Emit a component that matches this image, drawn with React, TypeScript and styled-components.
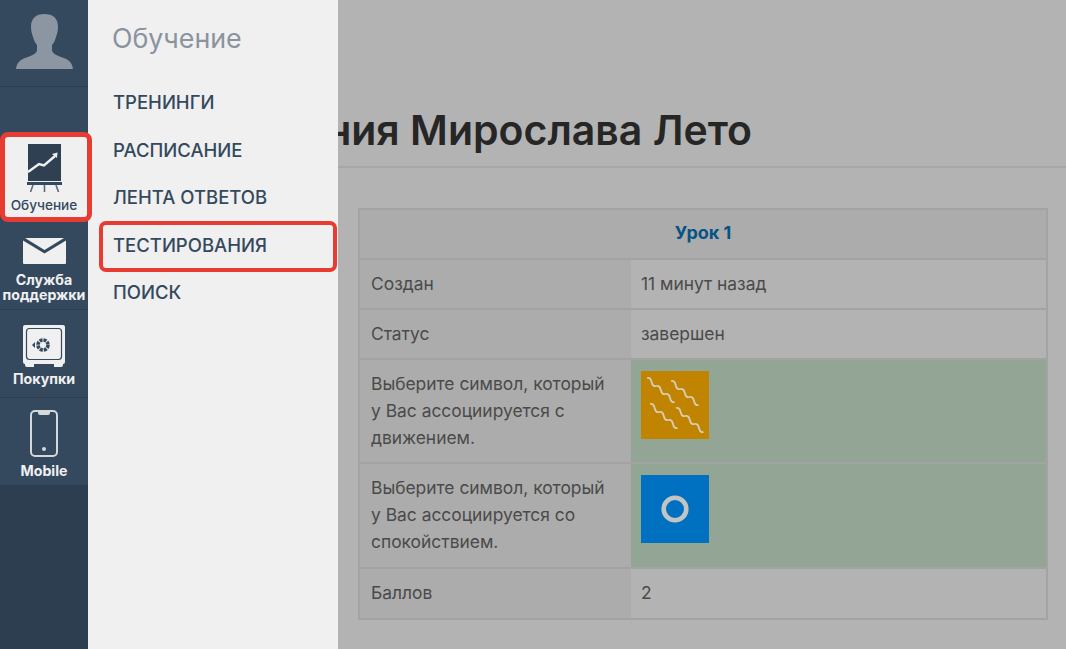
import React from 'react'
import styled, { createGlobalStyle } from 'styled-components'

const Global = createGlobalStyle`
  html, body { margin: 0; padding: 0; height: 100%; overflow: hidden; }
  body { font-family: Inter, "Open Sans", sans-serif; background: #b3b3b3; }
`

const Page = styled.div`
  display: flex;
  width: 1066px;
  height: 649px;
  overflow: hidden;
`

const Sidebar = styled.nav`
  flex: 0 0 88px;
  width: 88px;
  min-width: 0;
  display: flex;
  flex-direction: column;
  background: #2c3e50;
  position: relative;
  z-index: 2;
`

const SideTop = styled.div`
  background: #34495e;
`

const Avatar = styled.div`
  height: 87px;
  display: flex;
  justify-content: center;
  align-items: flex-start;
  padding-top: 14px;
  box-sizing: border-box;
  border-bottom: 1px solid #2c3e50;
`

const SideItem = styled.a<{ $top: number }>`
  display: flex;
  flex-direction: column;
  align-items: center;
  height: 88px;
  padding-top: ${p => p.$top}px;
  box-sizing: border-box;
  border-bottom: 1px solid #2c3e50;
`

const SideLabel = styled.span<{ $gap: number }>`
  margin-top: ${p => p.$gap}px;
  font-weight: 700;
  font-size: 14.2px;
  line-height: 15px;
  text-align: center;
  color: #f0f0f0;
`

const ActiveItem = styled.a`
  display: flex;
  flex-direction: column;
  align-items: center;
  box-sizing: border-box;
  height: 90px;
  margin-top: 45px;
  width: 92px;
  padding: 7px 4px 0 0;
  background: #f0f0f0;
  border: 5px solid #e63c32;
  border-radius: 8px;
  font-size: 13.6px;
  font-weight: 500;
  line-height: 16px;
  color: #34495e;
`

const ActiveLabel = styled.span`
  margin-top: 5px;
`

const Menu = styled.aside`
  flex: 0 0 250px;
  background: #f0f0f0;
  padding: 22px 0 0 25px;
  box-sizing: border-box;
  position: relative;
  z-index: 1;
`

const MenuTitle = styled.div`
  font-size: 26.8px;
  line-height: 32px;
  color: #8a939e;
  margin-left: -1px;
  margin-bottom: 25px;
`

const MenuList = styled.div`
  display: flex;
  flex-direction: column;
`

const MenuLink = styled.a`
  display: block;
  height: 47.5px;
  line-height: 47.5px;
  font-size: 18.5px;
  font-weight: 500;
  color: #34495e;
  position: relative;
`

const Outline = styled.span`
  position: absolute;
  left: -14px;
  top: -1px;
  width: 238px;
  height: 51px;
  border: 4px solid #e63c32;
  border-radius: 7px;
  box-sizing: border-box;
`

const Main = styled.main`
  flex: 1;
  min-width: 0;
  background: #b3b3b3;
`

const TitleBar = styled.div`
  height: 168px;
  box-sizing: border-box;
  border-bottom: 2px solid #a8a8a8;
  padding-top: 105px;
  padding-right: 314px;
  display: flex;
  justify-content: flex-end;
  white-space: nowrap;
`

const Title = styled.h1`
  margin: 0;
  font-size: 41px;
  line-height: 50px;
  font-weight: 600;
  color: #262626;
`

const Table = styled.div`
  margin: 40px 18px 0 20px;
  border: 2px solid #a3a3a3;
  font-size: 17.4px;
  color: #4a4a4a;
`

const Head = styled.div`
  height: 48px;
  line-height: 46px;
  text-align: center;
  font-weight: 700;
  font-size: 18px;
  color: #075384;
  background: #acacac;
  border-bottom: 2px solid #a3a3a3;
`

const Row = styled.div<{ $h: number; $last?: boolean }>`
  display: grid;
  grid-template-columns: 271px 1fr;
  height: ${p => p.$h}px;
  box-sizing: border-box;
  border-bottom: ${p => (p.$last ? 'none' : '2px solid #a3a3a3')};
`

const Label = styled.div`
  background: #acacac;
  padding: 0 20px 2px 11px;
  display: flex;
  align-items: center;
  line-height: 27px;
`

const Value = styled.div<{ $ok?: boolean }>`
  background: ${p => (p.$ok ? '#93a594' : '#b3b3b3')};
  padding: 0 10px 2px;
  display: flex;
  align-items: center;
`

const ImageValue = styled(Value)`
  align-items: flex-start;
`

const Swatch = styled.div<{ $bg: string }>`
  width: 68px;
  height: 68px;
  margin-top: 11px;
  background: ${p => p.$bg};
  display: flex;
  align-items: center;
  justify-content: center;
`

// staircase wave, 6 half periods along the diagonal
const wave = (x: number, y: number) => `M${x} ${y}q3.5 -1 4.6 4t4.6 4t4.6 4t4.6 4t4.6 4t4.6 4`

const waves = [wave(6, 7), wave(30, 10), wave(9, 33), wave(35, 37)]

export default function App() {
  return (
    <Page>
      <Global />
      <Sidebar>
        <SideTop>
          <Avatar>
            <svg width="57" height="55" viewBox="0 0 57 55">
              <path fill="#8b96a2" d="M28.5 0C20 0 15 4 15 13c0 4 1 7 2 10 1 3 2 6 4 8v5c0 3-4 5-9 7C6 45 1 47 0 55h57c-1-8-6-10-12-12-5-2-9-4-9-7v-5c2-2 3-5 4-8 1-3 2-6 2-10C42 4 37 0 28.5 0z" />
            </svg>
          </Avatar>
          <ActiveItem>
            <svg width="35" height="48" viewBox="0 0 35 48">
              <rect x="1" y="0" width="33" height="37" fill="#2f4053" />
              <rect x="0" y="38" width="35" height="3" fill="#34495e" />
              <path d="M6 41 L3.5 48 M17.5 41 V48 M29 41 L31.5 48" stroke="#5c6b7b" strokeWidth="1.6" fill="none" />
              <path d="M1 28 L12 20 L17 21.5 L28 12" stroke="#f0f0f0" strokeWidth="2.4" fill="none" />
              <path d="M25 10 L30.5 8.5 L30 14 Z" fill="#f0f0f0" />
            </svg>
            <ActiveLabel>Обучение</ActiveLabel>
          </ActiveItem>
          <SideItem $top={16}>
            <svg width="43" height="26" viewBox="0 0 43 26">
              <path fill="#f0f0f0" d="M0 2.5 21.5 15.5 43 2.5V25a1 1 0 0 1-1 1H1a1 1 0 0 1-1-1z" />
              <path fill="#f0f0f0" d="M2 0h39L21.5 12z" />
            </svg>
            <SideLabel $gap={8}>Служба поддержки</SideLabel>
          </SideItem>
          <SideItem $top={15}>
            <svg width="42" height="42" viewBox="0 0 42 42">
              <rect x="0" y="0" width="42" height="39" rx="2" fill="#f0f0f0" />
              <rect x="3.5" y="3.5" width="35" height="31" rx="3" fill="none" stroke="#34495e" strokeWidth="1.2" />
              <circle cx="20" cy="20" r="5" fill="none" stroke="#34495e" strokeWidth="3.6" strokeDasharray="3 0.9" />
              <path d="M9 20l3-3v6z" fill="#34495e" />
              <path d="M2 38h9v4H4a2 2 0 0 1-2-2zM31 38h9v2a2 2 0 0 1-2 2h-7z" fill="#f0f0f0" />
            </svg>
            <SideLabel $gap={4}>Покупки</SideLabel>
          </SideItem>
          <SideItem $top={12}>
            <svg width="28" height="47" viewBox="0 0 28 47">
              <rect x="1" y="1" width="26" height="45" rx="4" fill="none" stroke="#d4d7db" strokeWidth="2" />
              <path d="M8 1h12v2a2 2 0 0 1-2 2h-8a2 2 0 0 1-2-2z" fill="#d4d7db" />
              <circle cx="14" cy="39" r="2" fill="#d4d7db" />
            </svg>
            <SideLabel $gap={6}>Mobile</SideLabel>
          </SideItem>
        </SideTop>
      </Sidebar>
      <Menu>
        <MenuTitle>Обучение</MenuTitle>
        <MenuList>
          <MenuLink>ТРЕНИНГИ</MenuLink>
          <MenuLink>РАСПИСАНИЕ</MenuLink>
          <MenuLink>ЛЕНТА ОТВЕТОВ</MenuLink>
          <MenuLink>ТЕСТИРОВАНИЯ<Outline /></MenuLink>
          <MenuLink>ПОИСК</MenuLink>
        </MenuList>
      </Menu>
      <Main>
        <TitleBar>
          <Title>ния Мирослава Лето</Title>
        </TitleBar>
        <Table>
          <Head>Урок 1</Head>
          <Row $h={50}><Label>Создан</Label><Value>11 минут назад</Value></Row>
          <Row $h={50}><Label>Статус</Label><Value>завершен</Value></Row>
          <Row $h={104}>
            <Label>Выберите символ, который у Вас ассоциируется с движением.</Label>
            <ImageValue $ok>
              <Swatch $bg="#c08400">
                <svg width="68" height="68" viewBox="0 0 68 68">
                  {waves.map(d => <path key={d} d={d} fill="none" stroke="#d5cdb5" strokeWidth="1.8" />)}
                </svg>
              </Swatch>
            </ImageValue>
          </Row>
          <Row $h={105}>
            <Label>Выберите символ, который у Вас ассоциируется со спокойствием.</Label>
            <ImageValue $ok>
              <Swatch $bg="#0070c0">
                <svg width="28" height="28" viewBox="0 0 28 28">
                  <circle cx="14" cy="14" r="11.3" fill="none" stroke="#c4c4c4" strokeWidth="4.6" />
                </svg>
              </Swatch>
            </ImageValue>
          </Row>
          <Row $h={49} $last><Label>Баллов</Label><Value>2</Value></Row>
        </Table>
      </Main>
    </Page>
  )
}
